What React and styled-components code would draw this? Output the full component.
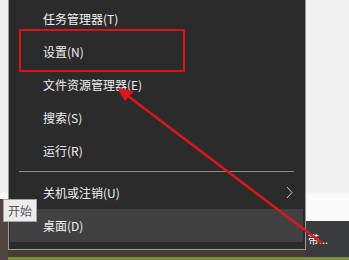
import React from 'react';
import styled, { createGlobalStyle } from 'styled-components';

const GlobalStyle = createGlobalStyle`
  html, body {
    margin: 0;
    padding: 0;
    background: #f0f0f0;
  }
  * {
    box-sizing: border-box;
  }
`;

const FONT = `"Noto Sans CJK SC", "Noto Sans", sans-serif`;

const Screen = styled.div`
  position: relative;
  width: 349px;
  height: 260px;
  overflow: hidden;
  display: grid;
  grid-template-columns: 8px 298px 1fr;
  grid-template-rows: 250px 1fr;
  font-family: ${FONT};
`;

const SideColumn = styled.div`
  grid-column: ${p => p.$col};
  grid-row: 1 / span 2;
  display: flex;
  flex-direction: column;
`;

const Fill = styled.div`
  flex: ${p => (p.$h ? `0 0 ${p.$h}px` : '1')};
  background: ${p => p.$bg};
`;

const Taskbar = styled.div`
  flex: 1;
  background: #3a3b3f;
  color: #f4f4f4;
  font-size: 11px;
  line-height: 1;
  padding: 13px 0 0 2px;
  white-space: nowrap;
`;

const GreenStrip = styled.div`
  flex: 0 0 3px;
  background: #7c8d3c;
`;

const Desktop = styled.div`
  grid-column: 2;
  grid-row: 2;
  display: flex;
  flex-direction: column;
`;

const Menu = styled.div`
  grid-column: 2;
  grid-row: 1;
  background: #2b2b2b;
  border: 1px solid #9a9a9a;
  border-top: none;
  padding: 2px 2px 7px 1px;
  display: flex;
  flex-direction: column;
`;

const Item = styled.div`
  height: 33px;
  display: flex;
  align-items: center;
  justify-content: space-between;
  padding: 0 10px 0 33px;
  color: #f0f0f0;
  font-size: 12px;
  background: ${p => (p.$active ? '#414141' : 'transparent')};
`;

const Separator = styled.div`
  height: 1px;
  margin: 4px 9px 4px 9px;
  background: #8a8a8a;
`;

const Highlight = styled.div`
  position: absolute;
  left: 19px;
  top: 29px;
  width: 166px;
  height: 43px;
  border: 2px solid #dc1219;
  pointer-events: none;
`;

const Overlay = styled.svg`
  position: absolute;
  left: 0;
  top: 0;
  pointer-events: none;
`;

const Tooltip = styled.div`
  position: absolute;
  left: 3px;
  top: 199px;
  width: 34px;
  height: 23px;
  background: #ececec;
  border: 1px solid #a5a5a5;
  color: #575757;
  font-size: 12px;
  display: flex;
  align-items: center;
  justify-content: center;
`;

const Chevron = () => (
  <svg width="7" height="13" viewBox="0 0 7 13">
    <polyline points="1,1 6,6.5 1,12" fill="none" stroke="#c8c8c8" strokeWidth="1" />
  </svg>
);

const items = [
  { label: '任务管理器(T)' },
  { label: '设置(N)' },
  { label: '文件资源管理器(E)' },
  { label: '搜索(S)' },
  { label: '运行(R)', sep: true },
  { label: '关机或注销(U)', sub: true },
  { label: '桌面(D)', active: true },
];

export default function App() {
  return (
    <>
      <GlobalStyle />
      <Screen>
        <SideColumn $col={1}>
          <Fill $h={193} $bg="#f0f0f0" />
          <Fill $h={6} $bg="#fbfbfb" />
          <Fill $bg="#524440" />
        </SideColumn>

        <Menu>
          {items.map((it, i) => (
            <React.Fragment key={i}>
              <Item $active={it.active}>
                <span>{it.label}</span>
                {it.sub && <Chevron />}
              </Item>
              {it.sep && <Separator />}
            </React.Fragment>
          ))}
        </Menu>

        <SideColumn $col={3}>
          <Fill $h={193} $bg="#f1f1f1" />
          <Fill $h={28} $bg="#fafafa" />
          <Taskbar>带...</Taskbar>
          <GreenStrip />
        </SideColumn>

        <Desktop>
          <Fill $bg="#4a3b35" />
          <GreenStrip />
        </Desktop>

        <Highlight />
        <Tooltip>开始</Tooltip>
        <Overlay width="349" height="260" viewBox="0 0 349 260">
          <line x1="322" y1="243" x2="128" y2="96" stroke="#e0141c" strokeWidth="2.5" />
          <polygon points="117,88 134,91 125,101" fill="#e0141c" />
        </Overlay>
      </Screen>
    </>
  );
}
